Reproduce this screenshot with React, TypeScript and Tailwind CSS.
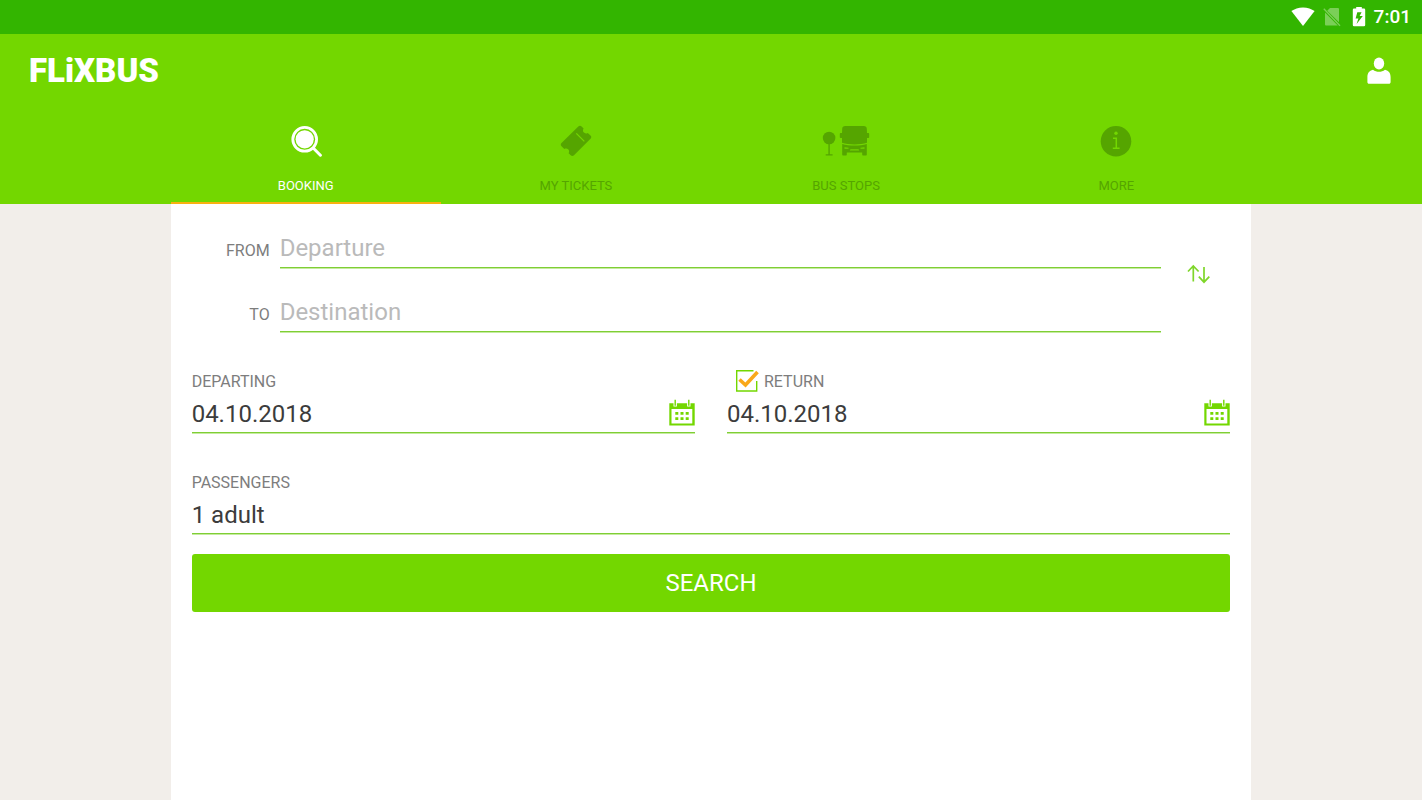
import { ReactElement, ReactNode, useState } from "react";

interface Tab {
	id: string;
	label: string;
	icon: ReactElement;
}

const WifiIcon = (): ReactElement => (
	<svg viewBox="0 0 24 20" className="h-5 w-6" fill="currentColor" aria-hidden="true">
		<path d="M12 19 .4 4.1C3.400 1.800 7.400.4 12 .4s8.600 1.400 11.600 3.700L12 19Z" />
	</svg>
);

const NoSimIcon = (): ReactElement => (
	<svg viewBox="0 0 18 20" className="h-5 w-[18px] text-[#7bcf58]" fill="currentColor" aria-hidden="true">
		<path d="M7 1h8a1 1 0 0 1 1 1v13.300L4.200 3.800 7 1ZM2 5.600 14.800 18.500H3a1 1 0 0 1-1-1V5.600Z" />
		<path d="M.8 1.800 17 18.800" fill="none" stroke="currentColor" strokeWidth="1.300" />
	</svg>
);

const BatteryIcon = (): ReactElement => (
	<svg viewBox="0 0 14 20" className="h-5 w-3.5" fill="currentColor" aria-hidden="true">
		<path
			fillRule="evenodd"
			d="M4.200 0h5.600v1.600H12a1.200 1.200 0 0 1 1.200 1.200v15.300A1.200 1.200 0 0 1 12 19.300H2A1.200 1.200 0 0 1 .8 18.100V2.800A1.200 1.200 0 0 1 2 1.600h2.200V0Zm1.100 5.200L3.600 11.400H6.400L4.600 17l6.200-8H7.600l2-3.800H5.300Z"
		/>
	</svg>
);

const UserIcon = (): ReactElement => (
	<svg viewBox="0 0 24 28" className="h-7 w-6" fill="currentColor" aria-hidden="true">
		<ellipse cx="12" cy="6.500" rx="5.200" ry="6" />
		<path d="M6 12.700c3.500 2.700 8.500 2.700 12 0 3.800.8 5.600 3.600 5.600 7.500V25c0 1.200-.6 1.800-1.800 1.800H2.200C1 26.800.4 26.200.4 25v-4.800c0-3.900 1.800-6.700 5.600-7.500Z" />
	</svg>
);

const SearchIcon = (): ReactElement => (
	<svg viewBox="0 0 32 32" className="h-8 w-8" fill="currentColor" aria-hidden="true">
		<circle cx="14.700" cy="14.300" r="11.900" fill="none" stroke="currentColor" strokeWidth="2.800" />
		<circle cx="14.700" cy="14.300" r="9.100" />
		<path d="m23.200 23 7.200 7.200" stroke="currentColor" strokeWidth="3" strokeLinecap="round" />
	</svg>
);

const TicketIcon = (): ReactElement => (
	<svg viewBox="0 0 32 32" className="h-8 w-8" fill="currentColor" aria-hidden="true">
		<path d="M18.300 1.600c1-1 2.400-1 3.300 0l2 2c-.9 1.500-.8 3 .3 4 1.100 1 2.500 1.100 3.900.3l2.700 2.700c1 1 1 2.200 0 3.200L14 30.300c-1 1-2.300 1-3.300 0l-2.100-2c.8-1.500.7-2.900-.4-4-1.100-1-2.500-1.100-3.900-.4l-2.800-2.700c-1-1-1-2.300 0-3.300L18.300 1.600Z" />
		<path d="m16.300 8.300 8 8" className="stroke-[#73d700]" strokeWidth="1.200" />
	</svg>
);

const BusIcon = (): ReactElement => (
	<svg viewBox="0 0 48 32" className="h-8 w-12" fill="currentColor" aria-hidden="true">
		<circle cx="7.100" cy="13" r="6.300" />
		<path d="M6.400 18h1.400v11.200h2.800v1.200H3.700v-1.200h2.700V18Z" />
		<path d="M23.300 1h18.400c2 0 3 .9 3.100 2.800l.2 4.300h1.400c.5 0 .8.3.8.8v3.300c0 .5-.3.8-.8.8H45v4.800c-3.600 1.100-7.600 1.600-12.500 1.600S23.600 18.900 20 17.800V13h-1.400a.8.8 0 0 1-.8-.8V8.900c0-.5.3-.8.8-.8H20l.2-4.300C20.300 1.900 21.300 1 23.300 1Z" />
		<path
			fillRule="evenodd"
			d="M20.200 19.100c3.700 1.100 7.700 1.500 12.300 1.500s8.600-.4 12.300-1.500v10.500c0 .7-.3 1-1 1h-2.600c-.7 0-1-.3-1-1v-2.100H24.800v2.100c0 .7-.3 1-1 1h-2.600c-.7 0-1-.3-1-1V19.100Zm2.300 3.100v1.500h4v-1l-4-.5Zm20 0-4 .5v1h4v-1.500ZM28.500 24.200l-.7 1.300h9.400l-.7-1.300h-8Z"
		/>
	</svg>
);

const InfoIcon = (): ReactElement => (
	<svg viewBox="0 0 32 32" className="h-8 w-8" fill="currentColor" aria-hidden="true">
		<circle cx="16" cy="16.300" r="15.300" />
		<circle cx="16" cy="8.300" r="1.700" className="fill-[#73d700]" />
		<path d="M13 13.300h3.300v9.900M12.800 23.200h6.800" fill="none" className="stroke-[#73d700]" strokeWidth="1.500" />
	</svg>
);

const SwapIcon = (): ReactElement => (
	<svg viewBox="0 0 24 20" className="h-5 w-6" fill="none" stroke="currentColor" strokeWidth="1.700" aria-hidden="true">
		<path d="M6.300 17.500V2M1 7.500 6.300 2l5.300 5.500M17 3v15M11.800 12.700l5.200 5.500 5.300-5.500" />
	</svg>
);

const CalendarIcon = (): ReactElement => (
	<svg viewBox="0 0 26 28" className="h-7 w-[26px]" fill="currentColor" aria-hidden="true">
		<path
			fillRule="evenodd"
			d="M.3 4.300h4.200v3.300h3.400V4.300h10.200v3.300h3.400V4.300h4.200V26.600H.3V4.300ZM2.500 10v14.400h20.800V10H2.500Z"
		/>
		<path d="M5.500.8h1.400v5.900H5.500V.8ZM19.100.8h1.400v5.900h-1.400V.8Z" />
		<path d="M6.300 12.900h3v2.800h-3zM11.500 12.900h3v2.800h-3zM16.700 12.900h3v2.800h-3zM6.300 18.200h3v2.800h-3zM11.500 18.200h3v2.800h-3zM16.700 18.200h3v2.800h-3z" />
	</svg>
);

const tabs: Tab[] = [
	{ id: "booking", label: "BOOKING", icon: <SearchIcon /> },
	{ id: "tickets", label: "MY TICKETS", icon: <TicketIcon /> },
	{ id: "stops", label: "BUS STOPS", icon: <BusIcon /> },
	{ id: "more", label: "MORE", icon: <InfoIcon /> },
];

const fieldLine = "border-b border-[#7fce35] shadow-[0_1px_0_#c5eb9f]";

interface PlaceFieldProps {
	id: string;
	label: string;
	placeholder: string;
	value: string;
	onChange: (value: string) => void;
}

function PlaceField({ id, label, placeholder, value, onChange }: PlaceFieldProps): ReactElement {
	return (
		<div className="flex items-baseline gap-2.5">
			<label htmlFor={id} className="w-[78px] shrink-0 text-right text-base text-[#7d7d7d]">
				{label}
			</label>
			<input
				id={id}
				type="text"
				placeholder={placeholder}
				value={value}
				onChange={(event): void => onChange(event.target.value)}
				className={`h-9 min-w-0 grow pb-1 text-2xl text-[#3c3c3c] outline-none placeholder:text-[#bababa] ${fieldLine}`}
			/>
		</div>
	);
}

interface DateFieldProps {
	id: string;
	name: string;
	label: ReactNode;
	value: string;
	onChange: (value: string) => void;
}

function DateField({ id, name, label, value, onChange }: DateFieldProps): ReactElement {
	return (
		<div>
			<div className="flex h-6 items-center text-base text-[#7d7d7d]">{label}</div>
			<div className={`mt-[3px] flex h-9 items-center ${fieldLine}`}>
				<input
					id={id}
					type="text"
					aria-label={name}
					value={value}
					onChange={(event): void => onChange(event.target.value)}
					className="h-8 min-w-0 grow pb-0.5 text-2xl text-[#3c3c3c] outline-none"
				/>
				<button type="button" aria-label={`${name} calendar`} className="pb-1 text-[#73d700]">
					<CalendarIcon />
				</button>
			</div>
		</div>
	);
}

export default function App(): ReactElement {
	const [activeTab, setActiveTab] = useState("booking");
	const [from, setFrom] = useState("");
	const [to, setTo] = useState("");
	const [departing, setDeparting] = useState("04.10.2018");
	const [returning, setReturning] = useState("04.10.2018");
	const [isReturn, setIsReturn] = useState(true);

	const swap = (): void => {
		setFrom(to);
		setTo(from);
	};

	return (
		<div className="flex min-h-screen flex-col bg-[#f2eeea] font-[Roboto,sans-serif]">
			<div className="flex h-[34px] items-center justify-end gap-2 bg-[#33b500] pr-[11px] text-white">
				<WifiIcon />
				<NoSimIcon />
				<span className="ml-[3px]">
					<BatteryIcon />
				</span>
				<span className="text-[19px] font-medium">7:01</span>
			</div>

			<header className="bg-[#73d700]">
				<div className="flex h-[74px] items-center justify-between pr-[31px] pl-[29px] text-white">
					<h1 className="text-[33px] font-black">FLiXBUS</h1>
					<button type="button" aria-label="Account">
						<UserIcon />
					</button>
				</div>
				<nav className="mx-auto grid w-[76%] grid-cols-4">
					{tabs.map((tab) => (
						<button
							key={tab.id}
							type="button"
							onClick={(): void => setActiveTab(tab.id)}
							className={`flex h-24 flex-col items-center gap-[19px] border-b-2 pt-[17px] text-[13px] leading-5 ${
								activeTab === tab.id ? "border-[#f9b010] text-white" : "border-transparent text-[#55a500]"
							}`}
						>
							{tab.icon}
							<span>{tab.label}</span>
						</button>
					))}
				</nav>
			</header>

			<main className="mx-auto w-[76%] grow bg-white px-[21px] pt-7">
				<form onSubmit={(event): void => event.preventDefault()}>
					<div className="flex items-center">
						<div className="flex grow flex-col gap-7">
							<PlaceField id="from" label="FROM" placeholder="Departure" value={from} onChange={setFrom} />
							<PlaceField id="to" label="TO" placeholder="Destination" value={to} onChange={setTo} />
						</div>
						<button type="button" aria-label="Swap" onClick={swap} className="mb-4 pr-[19px] pl-[26px] text-[#7fd62a]">
							<SwapIcon />
						</button>
					</div>

					<div className="mt-[38px] grid grid-cols-2 gap-8">
						<DateField id="departing" name="Departing" label={<label htmlFor="departing">DEPARTING</label>} value={departing} onChange={setDeparting} />
						<DateField
							id="returning"
							name="Return"
							label={
								<label className="relative ml-2 flex items-center gap-[5px]">
									<input type="checkbox" checked={isReturn} onChange={(event): void => setIsReturn(event.target.checked)} className="absolute size-6 appearance-none" />
									<svg viewBox="0 0 24 24" className="size-6" fill="none" aria-hidden="true">
										<path d="M18.500.7H1.700v20.300h20V11" className="stroke-[#73d700]" strokeWidth="1.400" />
										{isReturn && <path d="m4.500 9.500 6 5.500L22.500 2" className="stroke-[#f9a81a]" strokeWidth="3.600" />}
									</svg>
									RETURN
								</label>
							}
							value={returning}
							onChange={setReturning}
						/>
					</div>

					<div className="mt-[38px] flex flex-col">
						<label htmlFor="passengers" className="text-base text-[#7d7d7d]">
							PASSENGERS
						</label>
						<select id="passengers" defaultValue="1" className={`mt-[3px] h-9 appearance-none pb-0.5 text-2xl text-[#3c3c3c] outline-none ${fieldLine}`}>
							<option value="1">1 adult</option>
							<option value="2">2 adults</option>
							<option value="3">3 adults</option>
						</select>
					</div>

					<button type="submit" className="mt-5 h-[58px] w-full rounded-[3px] bg-[#73d700] text-2xl text-white">
						SEARCH
					</button>
				</form>
			</main>
		</div>
	);
}
